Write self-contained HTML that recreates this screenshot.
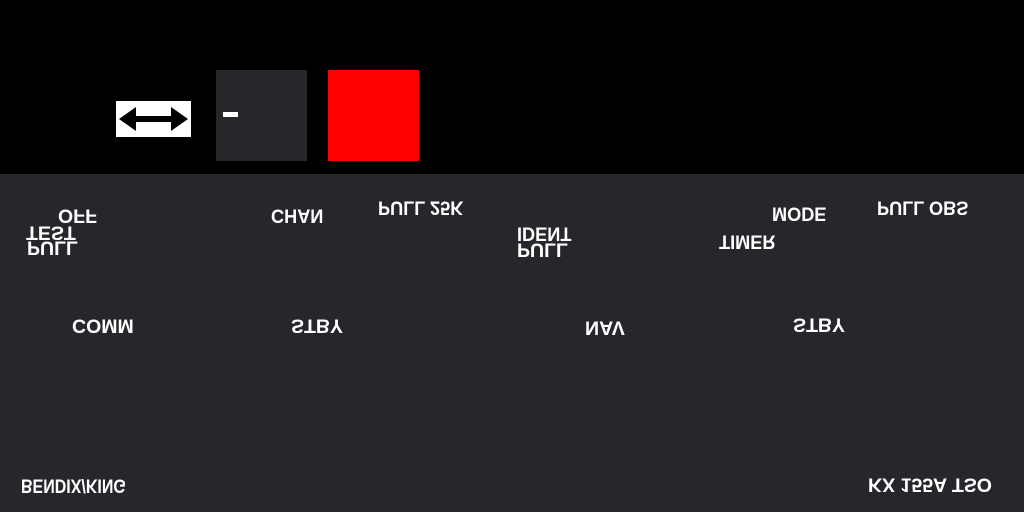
<!DOCTYPE html>
<html><head><style>
body{margin:0;width:1024px;height:512px;overflow:hidden;background:#26272b;position:relative;font-family:"Liberation Sans",sans-serif}
.top{position:absolute;left:0;top:0;width:1024px;height:174px;background:#000}
.t{position:absolute;color:#fff;font-weight:bold;font-size:19.5px;line-height:19.5px;height:19.5px;white-space:nowrap;transform:scaleY(-1);transform-origin:left center}
.n{transform:scaleY(-1) scaleX(0.93)}
</style></head><body>
<div class="top"></div>
<div style="position:absolute;left:116px;top:101px;width:75px;height:36px;background:#fff"></div>
<svg style="position:absolute;left:116px;top:101px" width="75" height="36"><path d="M3 18 L20 6 L20 15 L55 15 L55 6 L72 18 L55 30 L55 21 L20 21 L20 30 Z" fill="#000"/></svg>
<div style="position:absolute;left:216px;top:70px;width:91px;height:91px;background:#26272b"></div>
<div style="position:absolute;left:223px;top:112px;width:15px;height:5px;background:#fff"></div>
<div style="position:absolute;left:328px;top:70px;width:91px;height:91px;background:#f00"></div>

<div class="t" style="left:58px;top:205px">OFF</div>
<div class="t" style="left:26px;top:222px">TEST</div>
<div class="t" style="left:27px;top:237px">PULL</div>
<div class="t n" style="left:271px;top:205px">CHAN</div>
<div class="t n" style="left:378px;top:197px">PULL 25K</div>
<div class="t n" style="left:517px;top:223px">IDENT</div>
<div class="t" style="left:517px;top:239px">PULL</div>
<div class="t n" style="left:772px;top:203px">MODE</div>
<div class="t n" style="left:719px;top:231px">TIMER</div>
<div class="t n" style="left:877px;top:197px">PULL OBS</div>
<div class="t" style="left:72px;top:315px">COMM</div>
<div class="t" style="left:291px;top:315px">STBY</div>
<div class="t" style="left:585px;top:317px">NAV</div>
<div class="t" style="left:793px;top:314px">STBY</div>
<div class="t" style="left:21px;top:475px;transform:scaleY(-1) scaleX(0.82)">BENDIX/KING</div>
<div class="t" style="left:868px;top:474px">KX 155A TSO</div>
</body></html>
